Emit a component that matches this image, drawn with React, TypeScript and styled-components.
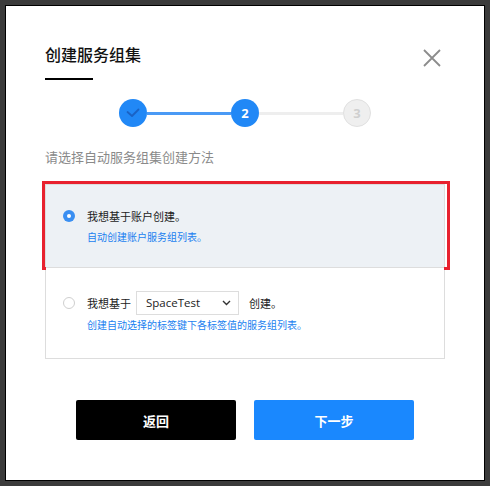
import React from "react";
import styled, { createGlobalStyle } from "styled-components";

const Global = createGlobalStyle`
  html, body { margin: 0; padding: 0; }
  body {
    background: #3b3b3b;
    font-family: "Noto Sans", "Noto Sans CJK SC", sans-serif;
    width: 490px;
    height: 486px;
    overflow: hidden;
  }
  * { box-sizing: border-box; }
`;

const Modal = styled.div`
  margin: 5px 0 0 5px;
  width: 480px;
  height: 476px;
  background: #fff;
  border: 1px solid #000;
  padding: 36px 39px 0 39px;
  display: flex;
  flex-direction: column;
`;

const Header = styled.div`
  display: flex;
  justify-content: space-between;
  align-items: flex-start;
`;

const TitleBlock = styled.div`
  display: flex;
  flex-direction: column;
`;

const Title = styled.h1`
  margin: 0;
  font-family: "Noto Sans CJK SC", sans-serif;
  font-size: 16px;
  line-height: 24px;
  font-weight: 500;
  color: #111;
`;

const TitleBar = styled.div`
  margin-top: 12px;
  width: 48px;
  height: 2px;
  background: #000;
`;

const Close = styled.button`
  margin: 6px 3px 0 0;
  width: 20px;
  height: 20px;
  padding: 0;
  border: none;
  background: none;
  display: flex;
  align-items: center;
  justify-content: center;
  cursor: pointer;
`;

const Steps = styled.div`
  margin-top: 19px;
  display: flex;
  align-items: center;
  justify-content: center;
`;

const StepCircle = styled.div<{ $state: "done" | "active" | "todo" }>`
  width: 28px;
  height: 28px;
  border-radius: 50%;
  display: flex;
  align-items: center;
  justify-content: center;
  font-family: "Open Sans", sans-serif;
  font-size: 13px;
  font-weight: 700;
  background: ${(p) => (p.$state === "todo" ? "#efefef" : "#2188f6")};
  border: ${(p) => (p.$state === "todo" ? "1px solid #e0e0e0" : "none")};
  color: ${(p) => (p.$state === "todo" ? "#cfcfcf" : "#fff")};
`;

const StepLine = styled.div<{ $done: boolean }>`
  width: 84px;
  height: 3px;
  background: ${(p) => (p.$done ? "#4a9af5" : "#eeeeee")};
`;

const Prompt = styled.p`
  margin: 21px 0 0 0;
  font-family: "Noto Sans CJK SC", sans-serif;
  font-size: 13px;
  line-height: 18px;
  color: #8a8a8a;
`;

const Options = styled.div`
  margin-top: 18px;
  border: 1px solid #dddddd;
  display: flex;
  flex-direction: column;
`;

const Option = styled.div<{ $selected?: boolean }>`
  position: relative;
  display: grid;
  grid-template-columns: 12px 1fr;
  column-gap: 12px;
  align-items: center;
  padding: ${(p) => (p.$selected ? "22px 16px 23px 17px" : "23px 16px 26px 17px")};
  background: ${(p) => (p.$selected ? "#edf1f5" : "#fff")};
  border-top: ${(p) => (p.$selected ? "none" : "1px solid #dddddd")};
`;

const Highlight = styled.div`
  position: absolute;
  left: -4px;
  top: -4px;
  right: -6px;
  bottom: -3px;
  border: 3px solid #e8212e;
  pointer-events: none;
`;

const Radio = styled.span<{ $checked?: boolean }>`
  width: 12px;
  height: 12px;
  border-radius: 50%;
  display: flex;
  align-items: center;
  justify-content: center;
  background: ${(p) => (p.$checked ? "#3a8ff2" : "#fff")};
  border: ${(p) => (p.$checked ? "none" : "1px solid #cfcfcf")};
  &::after {
    content: "";
    display: ${(p) => (p.$checked ? "block" : "none")};
    width: 4px;
    height: 4px;
    border-radius: 50%;
    background: #fff;
  }
`;

const MainLine = styled.div`
  display: flex;
  align-items: center;
  font-family: "Noto Sans CJK SC", sans-serif;
  font-size: 11px;
  line-height: 18px;
  color: #222;
`;

const Sub = styled.div<{ $gap: number }>`
  grid-column: 2;
  margin-top: ${(p) => p.$gap}px;
  font-family: "Noto Sans CJK SC", sans-serif;
  font-size: 10px;
  line-height: 14px;
  color: #1a7ff0;
`;

const Select = styled.div`
  margin: 0 10px 0 5px;
  width: 103px;
  height: 24px;
  border: 1px solid #dddddd;
  display: flex;
  align-items: center;
  justify-content: space-between;
  padding: 0 7px 0 9px;
  font-family: "Open Sans", "Noto Sans", sans-serif;
  font-size: 11.5px;
  color: #222;
  background: #fff;
`;

const Buttons = styled.div`
  margin-top: 41px;
  display: flex;
  justify-content: center;
  gap: 18px;
`;

const Button = styled.button<{ $primary?: boolean }>`
  width: 160px;
  height: 40px;
  border: none;
  border-radius: 2px;
  background: ${(p) => (p.$primary ? "#1a88fe" : "#000")};
  color: #fff;
  font-family: "Noto Sans CJK SC", sans-serif;
  font-size: 13px;
  font-weight: 700;
  cursor: pointer;
`;

export default function App() {
  return (
    <>
      <Global />
      <Modal>
        <Header>
          <TitleBlock>
            <Title>创建服务组集</Title>
            <TitleBar />
          </TitleBlock>
          <Close aria-label="close">
            <svg width="18" height="18" viewBox="0 0 18 18">
              <path d="M1 1 L17 17 M17 1 L1 17" stroke="#8c8c8c" strokeWidth="1.8" fill="none" />
            </svg>
          </Close>
        </Header>

        <Steps>
          <StepCircle $state="done">
            <svg width="14" height="10" viewBox="0 0 14 10">
              <path d="M1.5 4 L6 8 L12.5 1.5" stroke="#1a62c4" strokeWidth="1.8" fill="none" strokeLinecap="round" strokeLinejoin="round" />
            </svg>
          </StepCircle>
          <StepLine $done />
          <StepCircle $state="active">2</StepCircle>
          <StepLine $done={false} />
          <StepCircle $state="todo">3</StepCircle>
        </Steps>

        <Prompt>请选择自动服务组集创建方法</Prompt>

        <Options>
          <Option $selected>
            <Highlight />
            <Radio $checked />
            <MainLine>我想基于账户创建。</MainLine>
            <Sub $gap={5}>自动创建账户服务组列表。</Sub>
          </Option>
          <Option>
            <Radio />
            <MainLine>
              我想基于
              <Select>
                <span>SpaceTest</span>
                <svg width="9" height="6" viewBox="0 0 9 6">
                  <path d="M1 1 L4.5 4.5 L8 1" stroke="#333" strokeWidth="1.4" fill="none" />
                </svg>
              </Select>
              创建。
            </MainLine>
            <Sub $gap={3}>创建自动选择的标签键下各标签值的服务组列表。</Sub>
          </Option>
        </Options>

        <Buttons>
          <Button>返回</Button>
          <Button $primary>下一步</Button>
        </Buttons>
      </Modal>
    </>
  );
}
